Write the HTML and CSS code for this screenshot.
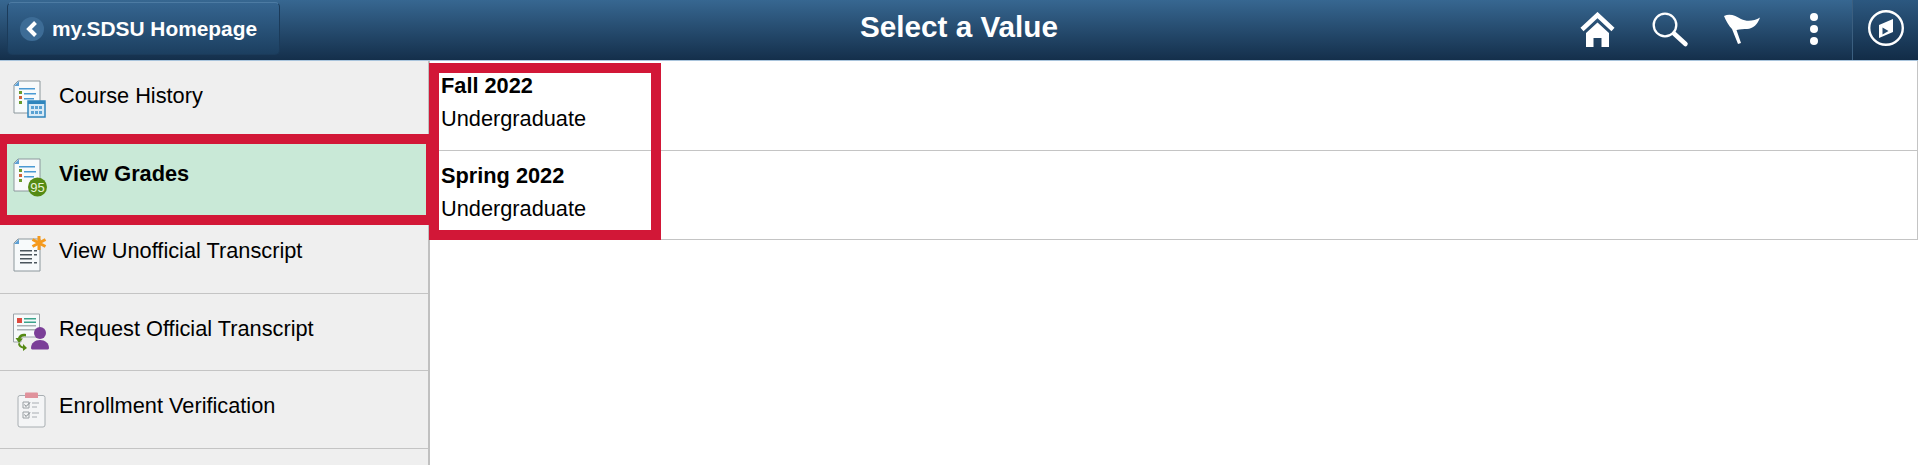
FILE: index.html
```html
<!DOCTYPE html>
<html lang="en">
<head>
    <meta charset="UTF-8">
    <title>Select a Value</title>
    <link rel="stylesheet" href="styles.css">
</head>
<body>
    <header class="banner">
        <div class="banner-left">
            <a class="home-button" href="#">
                <span class="back-circle">
                    <svg width="14" height="18" viewBox="0 0 14 18"><path d="M10.500 2.500 4 9l6.500 6.500" fill="none" stroke="#fff" stroke-width="4"/></svg>
                </span>
                my.SDSU Homepage
            </a>
        </div>
        <h1 class="banner-title">Select a Value</h1>
        <div class="banner-icons">
            <button class="icon-home">
                <svg width="36" height="36" viewBox="0 0 36 36"><path d="M2 17.500 17.500 3 33 17.500" fill="none" stroke="#fff" stroke-width="4.500"/><path d="M6 21 17.500 10.500 29 21v14h-7.500v-9h-8v9H6z" fill="#fff"/></svg>
            </button>
            <button class="icon-search">
                <svg width="38" height="38" viewBox="0 0 38 38"><circle cx="14" cy="14" r="11.300" fill="none" stroke="#fff" stroke-width="2.300"/><path d="M23 22.500 34.500 33" stroke="#fff" stroke-width="4.500" stroke-linecap="round"/></svg>
            </button>
            <button class="icon-flag">
                <svg width="38" height="34" viewBox="0 0 38 34"><path d="M0 3C6 0 12 3 17 6c6 3 13 2 19-1.500C34 11 29 16 23 16c-3 0-7 0-10.500 1L17 30l-3 1-6-15C5 13 2 8 0 3z" fill="#fff"/></svg>
            </button>
            <button class="icon-dots">
                <span class="dot"></span><span class="dot"></span><span class="dot"></span>
            </button>
            <button class="icon-nav">
                <svg width="38" height="38" viewBox="0 0 38 38"><circle cx="19" cy="19" r="16.800" fill="none" stroke="#fff" stroke-width="2.400"/><path d="M26 10 12 16v13l14-6z" fill="#fff"/><path d="M15.500 18.500v7l6-3.500z" fill="#24496c"/></svg>
            </button>
        </div>
    </header>

    <div class="page">
        <nav class="side-menu">
            <a class="side-item" href="#">
                <svg class="side-icon" width="36" height="40" viewBox="0 0 36 40">
                    <path d="M5 1h22v32H1V5z" fill="#f7fafb" stroke="#8c979c"/>
                    <path d="M1 6l5-5v5z" fill="#5d9fd3"/>
                    <path d="M6 8h16v1.500H6zM11 13h12v1.500H11zM11 18h10v1.500H11z" fill="#4a9ad4"/>
                    <path d="M6 11h3v3H6z" fill="#6a9a2e"/><path d="M6 16h3v3H6z" fill="#d0603a"/><path d="M6 21h3v3H6z" fill="#6a9a2e"/>
                    <rect x="15" y="21" width="17" height="16" fill="#d8eaf6" stroke="#2f85bd" stroke-width="1.500"/>
                    <path d="M15 21h17v3H15z" fill="#2f85bd"/>
                    <path d="M18 26h3v3h-3zM22 26h3v3h-3zM26 26h3v3h-3zM18 31h3v3h-3zM22 31h3v3h-3zM26 31h3v3h-3z" fill="#5aa2d3"/>
                </svg>
                <span class="side-label">Course History</span>
            </a>
            <a class="side-item side-item-active" href="#">
                <svg class="side-icon" width="36" height="40" viewBox="0 0 36 40">
                    <path d="M5 1h22v32H1V5z" fill="#f7fafb" stroke="#8c979c"/>
                    <path d="M1 6l5-5v5z" fill="#5d9fd3"/>
                    <path d="M6 8h16v1.500H6zM11 13h12v1.500H11zM11 18h10v1.500H11z" fill="#4a9ad4"/>
                    <path d="M6 11h3v3H6z" fill="#6a9a2e"/><path d="M6 16h3v3H6z" fill="#d0603a"/><path d="M6 21h3v3H6z" fill="#6a9a2e"/>
                    <circle cx="24.500" cy="29" r="9.500" fill="#558a14"/>
                    <text x="24.500" y="33.500" class="badge-text">95</text>
                </svg>
                <span class="side-label side-label-bold">View Grades</span>
            </a>
            <a class="side-item" href="#">
                <svg class="side-icon" width="36" height="40" viewBox="0 0 36 40">
                    <g transform="translate(0 3)">
                        <path d="M5 1h22v32H1V5z" fill="#f7fafb" stroke="#8c979c"/>
                        <path d="M1 6l5-5v5z" fill="#5d9fd3"/>
                        <path d="M7 12h12v1.500H7zM7 16h12v1.500H7zM7 20h12v1.500H7zM7 24h12v1.500H7z" fill="#4a555c"/>
                        <path d="M21 12h3v1.500h-3zM21 16h3v1.500h-3zM21 24h3v1.500h-3z" fill="#4a555c"/>
                    </g>
                    <path d="M26 1v14M19.500 4.500l13 7M32.500 4.500l-13 7" stroke="#f59a1d" stroke-width="3"/>
                </svg>
                <span class="side-label">View Unofficial Transcript</span>
            </a>
            <a class="side-item" href="#">
                <svg class="side-icon" width="38" height="38" viewBox="0 0 38 38">
                    <path d="M.5 1h26v23H8v5H.5z" fill="#f7fafb" stroke="#9aa3a8"/>
                    <path d="M4 5h5v5H4z" fill="#dd4a3e"/>
                    <path d="M11 5h12v1.500H11zM11 8.500h12V10H11z" fill="#3ba38b"/>
                    <path d="M4 12h19v1.500H4zM4 16h19v1.500H4z" fill="#a9b0b4"/>
                    <path d="M13 21c-3-1-7 0-8 4h-2.500l3.500 5 4-4.500H7.500c1-2 3-2.500 5.500-2z" fill="#558a14"/>
                    <path d="M7 30c0 2 1 3 3 3.500V31l4 4-4 3v-2.500c-3-.5-5-2.500-5-5z" fill="#558a14"/>
                    <circle cx="27" cy="20" r="6" fill="#7b3f98"/>
                    <path d="M18 35c0-5 4-8 9-8s9 3 9 8c0 1-1 1.500-2 1.500H20c-1 0-2-.5-2-1.500z" fill="#7b3f98"/>
                </svg>
                <span class="side-label">Request Official Transcript</span>
            </a>
            <a class="side-item" href="#">
                <svg class="side-icon icon-clip" width="30" height="36" viewBox="0 0 30 36">
                    <rect x="1" y="3.500" width="27" height="31.500" rx="2" fill="#f4f5f6" stroke="#a8aeb2"/>
                    <path d="M8 1.500a1 1 0 0 1 1-1h11a1 1 0 0 1 1 1V6H8z" fill="#e0929c"/>
                    <path d="M6 10h6v6H6zM6 20h6v6H6z" fill="none" stroke="#9aa0a4"/>
                    <path d="M7.500 12.500l1.500 2 4-4M7.500 22.500l1.500 2 4-4" fill="none" stroke="#7d8488"/>
                    <path d="M15 11h7M15 15h5M15 21h7M15 25h5" stroke="#a8aeb2" stroke-width="1.200"/>
                </svg>
                <span class="side-label">Enrollment Verification</span>
            </a>
            <div class="side-item side-item-empty"></div>
        </nav>

        <main class="value-list">
            <a class="value-row" href="#">
                <strong>Fall 2022</strong>
                <span>Undergraduate</span>
            </a>
            <a class="value-row" href="#">
                <strong>Spring 2022</strong>
                <span>Undergraduate</span>
            </a>
            <div class="value-callout"></div>
        </main>
    </div>
</body>
</html>
```

FILE: styles.css
```css
*, *::after {
    margin: 0;
    padding: 0;
    box-sizing: border-box;
}

html, body {
    height: 100%;
    overflow: hidden;
}

body {
    display: flex;
    flex-direction: column;
    background-color: #fff;
    color: #000;
    font-family: 'Liberation Sans', Arial, sans-serif;
    font-size: 21.76px;
}

a {
    color: inherit;
    text-decoration: none;
}

button {
    display: flex;
    align-items: center;
    justify-content: center;
    background: none;
    border: none;
}

.banner {
    display: grid;
    grid-template-columns: 1fr auto 1fr;
    align-items: center;
    flex: none;
    height: 61px;
    background: linear-gradient(#376791, #142f4b);
    border-bottom: 1px solid #a9c4dc;
    color: #fff;
}

.banner-left {
    display: flex;
    padding-left: 7px;
}

.home-button {
    display: flex;
    align-items: center;
    width: 273px;
    height: 53px;
    margin-top: -3px;
    padding-left: 12px;
    gap: 8px;
    border: 1px solid #1b3b5a;
    border-top-color: #4d7ba3;
    border-radius: 5px;
    background: linear-gradient(#356590, #1c3f60);
    font-size: 20.900px;
    font-weight: bold;
}

.back-circle {
    display: flex;
    align-items: center;
    justify-content: center;
    width: 24px;
    height: 24px;
    border-radius: 50%;
    background-color: #3d6c96;
}

.banner-title {
    margin-top: -6px;
    font-size: 29.700px;
    font-weight: bold;
}

.banner-icons {
    display: flex;
    justify-content: flex-end;
    align-items: center;
    height: 60px;
}

.icon-home {
    width: 36px;
    margin-right: 35px;
}

.icon-search {
    width: 38px;
    margin-right: 35px;
}

.icon-flag {
    width: 38px;
    margin-right: 48px;
}

.icon-dots {
    flex-direction: column;
    gap: 4px;
    width: 8px;
    margin: -2px 34px 0 0;
}

.dot {
    width: 8px;
    height: 8px;
    border-radius: 50%;
    background-color: #fff;
}

.icon-nav {
    width: 66px;
    height: 60px;
    padding-bottom: 5px;
    border-left: 1px solid #3b5f80;
    background: linear-gradient(#2c5880, #122c47);
}

.page {
    display: flex;
    flex: 1;
    min-height: 0;
}

.side-menu {
    flex: none;
    width: 430px;
    background-color: #efefef;
    border-right: 2px solid #c0c0c0;
}

.side-item {
    position: relative;
    display: grid;
    grid-template-columns: 46px 1fr;
    align-items: start;
    height: 77.500px;
    padding: 19px 0 0 13px;
    border-bottom: 1px solid #c4c4c4;
}

.side-item-empty {
    height: 16px;
    padding: 0;
    border-bottom: none;
}

.side-item-active {
    background-color: #c9e9d7;
}

/* red marker drawn over the selected row */
.side-item-active::after {
    content: "";
    position: absolute;
    top: -5px;
    left: -3px;
    width: 432px;
    height: 91px;
    border: 10px solid #d21737;
    border-right-width: 3px;
}

.icon-clip {
    margin: 2px 0 0 4px;
}

.side-label {
    line-height: 31px;
}

.side-label-bold {
    font-weight: bold;
}

.badge-text {
    fill: #e8f2d8;
    font-family: 'Liberation Sans', Arial, sans-serif;
    font-size: 13px;
    text-anchor: middle;
}

.value-list {
    position: relative;
    flex: 1;
}

.value-row {
    display: flex;
    flex-direction: column;
    height: 89.500px;
    padding: 8px 0 0 11px;
    line-height: 33px;
    border-right: 1px solid #c4c4c4;
    border-bottom: 1px solid #c4c4c4;
}

/* red marker drawn over the two terms */
.value-callout {
    position: absolute;
    top: 2px;
    left: -1px;
    width: 232px;
    height: 177px;
    border: 10px solid #d21737;
}
```
